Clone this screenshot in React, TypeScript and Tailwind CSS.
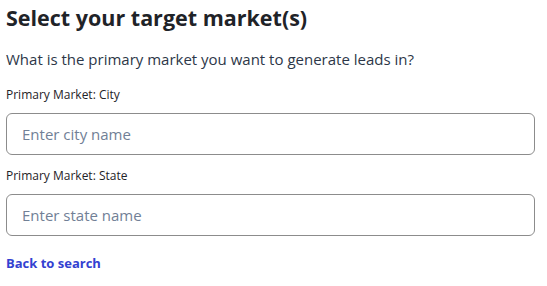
import { useState } from "react";

const App = () => {
  const [city, setCity] = useState("");
  const [state, setState] = useState("");

  return (
    <div className="min-h-screen w-full bg-white px-[6px] pt-[4px] font-['Open_Sans','Liberation_Sans',sans-serif]">
      <h1 className="text-[21.5px] font-bold leading-[28px] text-[#1f2328]">Select your target market(s)</h1>
      <p className="mt-[17px] text-[15px] leading-[20px] text-[#2d3748]">
        What is the primary market you want to generate leads in?
      </p>

      <div className="mt-[18px]">
        <label htmlFor="city" className="block text-[12px] leading-[16px] text-[#1f2328]">
          Primary Market: City
        </label>
        <input
          id="city"
          type="text"
          placeholder="Enter city name"
          value={city}
          onChange={(e) => setCity(e.target.value)}
          className="mt-[10px] h-[42px] w-[529px] rounded-[6px] border border-[#8c8c8c] px-[15px] text-[15px] text-[#1f2328] outline-none placeholder:text-[#718096]"
        />
      </div>

      <div className="mt-[13px]">
        <label htmlFor="state" className="block text-[12px] leading-[16px] text-[#1f2328]">
          Primary Market: State
        </label>
        <input
          id="state"
          type="text"
          placeholder="Enter state name"
          value={state}
          onChange={(e) => setState(e.target.value)}
          className="mt-[10px] h-[42px] w-[529px] rounded-[6px] border border-[#8c8c8c] px-[15px] text-[15px] text-[#1f2328] outline-none placeholder:text-[#718096]"
        />
      </div>

      <a href="#" className="mt-[19px] block text-[13px] font-bold leading-[16px] text-[#3341d1]">
        Back to search
      </a>
    </div>
  );
};

export default App;
